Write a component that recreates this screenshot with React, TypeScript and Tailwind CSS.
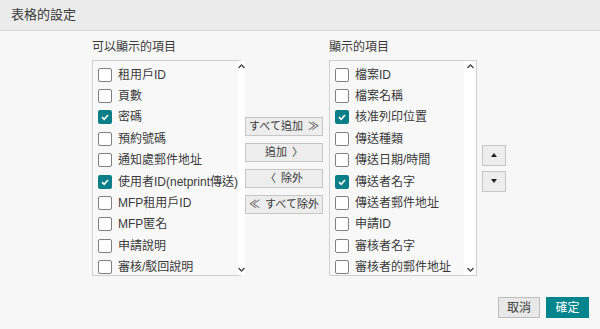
import React from 'react';

type Item = { label: string; checked?: boolean };

const available: Item[] = [
  { label: '租用戶ID' },
  { label: '頁數' },
  { label: '密碼', checked: true },
  { label: '預約號碼' },
  { label: '通知處郵件地址' },
  { label: '使用者ID(netprint傳送)', checked: true },
  { label: 'MFP租用戶ID' },
  { label: 'MFP匿名' },
  { label: '申請說明' },
  { label: '審核/駁回說明' },
];

const shown: Item[] = [
  { label: '檔案ID' },
  { label: '檔案名稱' },
  { label: '核准列印位置', checked: true },
  { label: '傳送種類' },
  { label: '傳送日期/時間' },
  { label: '傳送者名字', checked: true },
  { label: '傳送者郵件地址' },
  { label: '申請ID' },
  { label: '審核者名字' },
  { label: '審核者的郵件地址' },
];

const Check = ({ checked }: { checked?: boolean }) =>
  checked ? (
    <span className="w-[14px] h-[14px] rounded-[2px] bg-[#0b7f88] flex items-center justify-center shrink-0">
      <svg width="10" height="10" viewBox="0 0 10 10">
        <path d="M2 5.2 L4.2 7.3 L8 3" fill="none" stroke="#fff" strokeWidth="1.6" />
      </svg>
    </span>
  ) : (
    <span className="w-[14px] h-[14px] rounded-[2px] border border-[#808080] bg-white shrink-0" />
  );

const ListBox = ({ items, width }: { items: Item[]; width: string }) => (
  <div className={`${width} h-[216px] border border-[#cfcfcf] bg-[#f8f8f8] flex`}>
    <div className="flex-1 pt-[3px] pl-[5px]">
      {items.map((it) => (
        <div key={it.label} className="h-[21.4px] flex items-center gap-[6px] text-[12px] text-[#3a3a3a]">
          <Check checked={it.checked} />
          <span className="whitespace-nowrap">{it.label}</span>
        </div>
      ))}
    </div>
    <div className="w-[12px] bg-white flex flex-col justify-between items-center py-[3px]">
      <svg width="7" height="5" viewBox="0 0 7 5">
        <path d="M0.5 4 L3.5 1 L6.5 4" fill="none" stroke="#444" strokeWidth="1.3" />
      </svg>
      <svg width="7" height="5" viewBox="0 0 7 5">
        <path d="M0.5 1 L3.5 4 L6.5 1" fill="none" stroke="#444" strokeWidth="1.3" />
      </svg>
    </div>
  </div>
);

const MoveButton = ({ children }: { children: React.ReactNode }) => (
  <button className="w-[78px] h-[19px] border border-[#c6c6c6] bg-[#ededed] text-[11px] text-[#3a3a3a] flex items-center justify-center gap-[5px] leading-none whitespace-nowrap">
    {children}
  </button>
);

export default function App() {
  return (
    <div
      className="w-[600px] h-[329px] bg-[#f7f7f7] flex flex-col"
      style={{ fontFamily: '"Liberation Sans", "Noto Sans CJK TC", sans-serif' }}
    >
      <header className="h-[31px] bg-[#ebebeb] border-b border-[#d6d6d6] flex items-center px-[11px] text-[13px] text-[#3a3a3a]">
        表格的設定
      </header>

      <div className="flex-1 pl-[92px] pt-[7px]">
        <div className="flex text-[12px] text-[#3a3a3a] h-[22px] items-start">
          <span className="w-[237px]">可以顯示的項目</span>
          <span>顯示的項目</span>
        </div>
        <div className="flex items-center">
          <ListBox items={available} width="w-[149px]" />
          <div className="flex flex-col gap-[7px] ml-[4px] mr-[6px] -mt-[6px]">
            <MoveButton><span>すべて追加</span><span>≫</span></MoveButton>
            <MoveButton><span>追加</span><span>〉</span></MoveButton>
            <MoveButton><span>〈</span><span>除外</span></MoveButton>
            <MoveButton><span>≪</span><span>すべて除外</span></MoveButton>
          </div>
          <ListBox items={shown} width="w-[148px]" />
          <div className="flex flex-col gap-[5px] ml-[5px]">
            <button className="w-[24px] h-[21px] border border-[#c6c6c6] bg-[#ededed] flex items-center justify-center">
              <svg width="6" height="4" viewBox="0 0 6 4"><path d="M0 4 L3 0 L6 4 Z" fill="#222" /></svg>
            </button>
            <button className="w-[24px] h-[21px] border border-[#c6c6c6] bg-[#ededed] flex items-center justify-center">
              <svg width="6" height="4" viewBox="0 0 6 4"><path d="M0 0 L3 4 L6 0 Z" fill="#222" /></svg>
            </button>
          </div>
        </div>
      </div>

      <footer className="flex justify-end gap-[6px] pr-[11px] pb-[11px]">
        <button className="w-[42px] h-[21px] border border-[#bdbdbd] bg-[#e8e8e8] text-[12px] text-[#3a3a3a]">取消</button>
        <button className="w-[43px] h-[21px] bg-[#00858c] text-[12px] text-white">確定</button>
      </footer>
    </div>
  );
}
